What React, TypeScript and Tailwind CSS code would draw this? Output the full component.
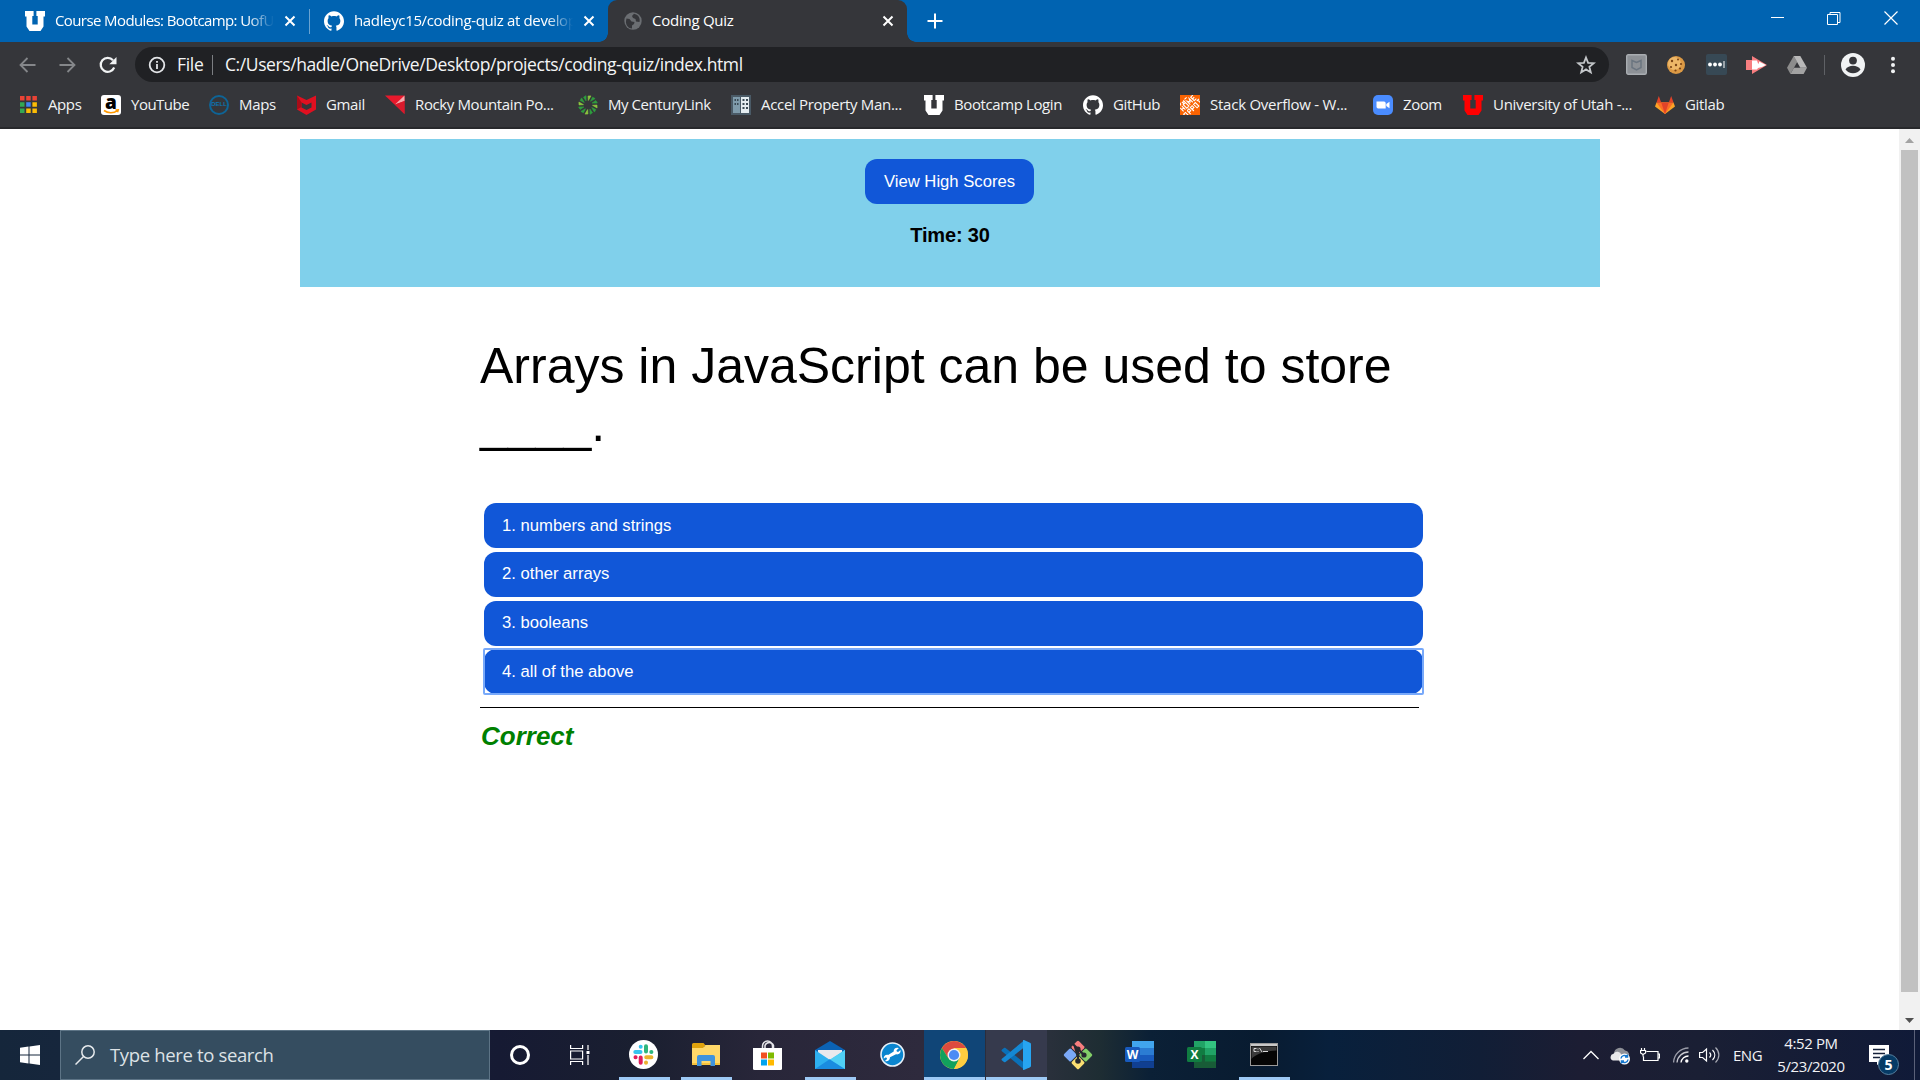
import React from "react";
import { SiGithub } from "react-icons/si";

type P = { children?: React.ReactNode };

const UtahU = ({ className }: { className: string }) => (
  <svg viewBox="0 0 20 20" className={className} fill="currentColor">
    <path d="M0 0h8.600v5H7.300v8.500h5.400V5h-1.300V0H20v5.500h-1.500v10L15.500 20h-11l-3-4.500v-10H0z" />
  </svg>
);

const TabClose = ({ className }: { className: string }) => (
  <svg viewBox="0 0 12 12" className={className} stroke="currentColor" strokeWidth="2" fill="none">
    <path d="M1.500 1.500l9 9M10.500 1.500l-9 9" />
  </svg>
);

const AppsIcon = () => (
  <svg viewBox="0 0 17 17" className="h-[17px] w-[17px]">
    <path fill="#ea4335" d="M0 0h4.500v4.500H0zM6.200 0h4.500v4.500H6.200zM12.400 0h4.500v4.500h-4.500z" />
    <path fill="#34a853" d="M0 6.200h4.500v4.500H0zM0 12.400h4.500v4.500H0z" />
    <path fill="#4285f4" d="M6.200 6.200h4.500v4.500H6.200z" />
    <path fill="#fbbc05" d="M12.400 6.200h4.500v4.500h-4.500zM6.200 12.400h4.500v4.500H6.200zM12.400 12.400h4.500v4.500h-4.500z" />
  </svg>
);

const AmazonIcon = () => (
  <div className="relative h-5 w-5 rounded-[3px] bg-white">
    <span className="absolute -top-[4px] left-[4px] font-['Open_Sans',sans-serif] text-[19px] leading-[22px] font-extrabold text-black">a</span>
    <svg viewBox="0 0 20 20" className="absolute inset-0 h-5 w-5" fill="none" stroke="#f90" strokeWidth="1.600">
      <path d="M3 15.500c4 3 9.500 3 13.500.2M14.500 15l2.700-.2-.7 2.500" />
    </svg>
  </div>
);

const DellIcon = () => (
  <div className="flex h-5 w-5 items-center justify-center rounded-full border-2 border-[#0e6496] font-['Liberation_Sans',sans-serif] text-[6px] font-bold text-[#0f74b0]">
    <span>DELL</span>
  </div>
);

const McAfee = () => (
  <svg viewBox="0 0 19 20" className="h-5 w-[19px]">
    <path fill="#e01020" d="M0 .5L9.500 5 19 .5v14L9.500 20 0 14.500z" />
    <path fill="#35363a" d="M4.500 7.500l5 2.500 5-2.500V12.500l-5 2.500-5-2.500z" />
    <path fill="#a80c18" d="M0 .5L4.500 7.500V12L0 14.500z" />
  </svg>
);

const Rocky = () => (
  <svg viewBox="0 0 20 20" className="h-5 w-5">
    <path fill="#e8192c" d="M0 .5h19.500V19z" />
    <path fill="#f3a9ad" d="M10 9.500L19.500.5V6z" />
    <path fill="#d81a2c" d="M10 9.500L19.500 6v13z" />
  </svg>
);

const Century = () => (
  <svg viewBox="-10 -10 20 20" className="h-5 w-5">
    {Array.from({ length: 12 }, (_, i) => (
      <path
        key={i}
        d="M-.6-4.500L-1.800-8.800 1-9.500z"
        fill={i % 3 === 0 ? "#8cc63f" : "#2e9e3e"}
        stroke={i % 3 === 0 ? "#8cc63f" : "#2e9e3e"}
        strokeWidth=".6"
        transform={`rotate(${i * 30 + 12})`}
      />
    ))}
  </svg>
);

const Accel = () => (
  <svg viewBox="0 0 20 20" className="h-5 w-5">
    <path fill="#4a5a66" d="M0 0h20v20H0z" />
    <path fill="#7f9bab" d="M2 2h7v16H2z" />
    <path fill="#e4ecf0" d="M10 2h8v16h-8z" />
    <path fill="#3b4a55" d="M3.500 4h1.500v2H3.500zM6 4h1.500v2H6zM3.500 8h1.500v2H3.500zM6 8h1.500v2H6zM11.500 4h2v2h-2zM15 4h2v2h-2zM11.500 8h2v2h-2zM15 8h2v2h-2zM11.500 12h2v2h-2zM15 12h2v2h-2z" />
  </svg>
);

const Depot = () => (
  <svg viewBox="0 0 20 20" className="h-5 w-5">
    <path fill="#f96302" d="M0 0h20v20H0z" />
    <g transform="rotate(-45 10 10)" stroke="#fff" fill="none" strokeWidth="1.100">
      <path d="M1 5v5M1 7.500h2.500M3.500 5v5M5.500 5h3v5h-3zM10.500 10V5l1.700 3 1.700-3v5M19 5h-3v5h3M16 7.500h2.500M3.500 2v2M2 2h3M6.500 2v2.500M8.500 2v2.500M6.500 3.200h2M10 2.200h3" />
      <path d="M-1 12v5h2.500v-5zM4 12v5M4 12h2.500v2.500H4M8.500 17v-5h2.500v2.500H8.500M13 12h2.500v5H13zM17.500 12h3M19 12v5" />
    </g>
  </svg>
);

const ZoomIcon = () => (
  <svg viewBox="0 0 20 20" className="h-5 w-5">
    <rect width="20" height="20" rx="5" fill="#4a8cff" />
    <path fill="#fff" d="M3.500 6.500h7.500a1.700 1.700 0 011.700 1.700v5.300H5.200a1.700 1.700 0 01-1.700-1.700zM13.300 9l3.200-2.300v6.600L13.300 11z" />
  </svg>
);

const Gitlab = () => (
  <svg viewBox="0 0 20 20" className="h-5 w-5">
    <path fill="#fca326" d="M10 19L0 11.500 1.500 7.500h17L20 11.500z" />
    <path fill="#fc6d26" d="M10 19L1.500 7.500h17z" />
    <path fill="#e24329" d="M10 19L6.200 7.500h7.600zM1.500 7.500L3.800 1l2.400 6.500zM18.500 7.500L16.200 1l-2.400 6.500z" />
  </svg>
);

const Bookmark = ({ icon, label, cell, text }: { icon: React.ReactNode; label: string; cell: string; text: string }) => (
  <div className={`flex shrink-0 items-center gap-[10px] ${cell}`}>
    <div className="flex w-5 shrink-0 justify-center">{icon}</div>
    <span className={`pb-[2px] text-[15px] leading-5 whitespace-nowrap text-[#f1f3f4] ${text}`}>{label}</span>
  </div>
);

function TabStrip() {
  return (
    <div className="flex h-[42px] bg-[#0063b1] text-[15px] text-white">
      <div className="flex w-[309px] items-center pl-[25px]">
        <UtahU className="h-5 w-5" />
        <div className="ml-[10px] w-[219px] overflow-hidden pb-[2px] tracking-[-0.600px] whitespace-nowrap [mask-image:linear-gradient(to_right,black_88%,transparent)]">Course Modules: Bootcamp: UofU</div>
        <TabClose className="ml-[10px] h-3 w-3" />
      </div>
      <div className="mt-[9px] h-[25px] w-px bg-[#69a3d1]" />
      <div className="flex w-[298px] items-center pl-[14px]">
        <SiGithub className="h-5 w-5" />
        <div className="ml-[10px] w-[219px] overflow-hidden pb-[2px] tracking-[-0.350px] whitespace-nowrap [mask-image:linear-gradient(to_right,black_88%,transparent)]">hadleyc15/coding-quiz at develop</div>
        <TabClose className="ml-[10px] h-3 w-3" />
      </div>
      <div className="relative flex w-[299px] items-center rounded-t-[9px] bg-[#35363a] pl-[16px]">
        <div className="absolute bottom-0 -left-[9px] h-[9px] w-[9px] bg-[radial-gradient(circle_at_0_0,transparent_8.500px,#35363a_9px)]" />
        <div className="absolute -right-[9px] bottom-0 h-[9px] w-[9px] bg-[radial-gradient(circle_at_100%_0,transparent_8.500px,#35363a_9px)]" />
        <svg viewBox="0 0 18 18" className="h-[18px] w-[18px]">
          <circle cx="9" cy="9" r="8.700" fill="#6b6e72" />
          <path fill="#35363a" d="M2.500 6.500l3 .5 2 2.500 3 .5-.5 2-2 1.500v3C4.500 16.500 1.500 13 2 9zM10 1.800L8 4l1 2 2.500 1 .5 2.500 3.500.5C16.500 6 14 2.500 10 1.800z" />
        </svg>
        <span className="ml-[10px] w-[221px] pb-[2px] tracking-[-0.250px]">Coding Quiz</span>
        <TabClose className="ml-[9px] h-3 w-3" />
      </div>
      <svg viewBox="0 0 16 16" className="mt-[13px] ml-[20px] h-4 w-4" stroke="#fff" strokeWidth="2">
        <path d="M8 .5v15M.5 8h15" />
      </svg>
      <div className="flex flex-1 justify-end gap-[43px] pt-[11px] pr-[22px]">
        <svg viewBox="0 0 14 14" className="h-[14px] w-[14px]" stroke="#fff"><path d="M1 6.500h13" /></svg>
        <svg viewBox="0 0 14 14" className="h-[14px] w-[14px]" stroke="#fff" fill="none"><path d="M.5 3.500h10v10H.5zM3 3V1.500h10v10h-2" /></svg>
        <svg viewBox="0 0 14 14" className="h-[14px] w-[14px]" stroke="#fff" strokeWidth="1.200"><path d="M.5.5l13 13M13.500.5l-13 13" /></svg>
      </div>
    </div>
  );
}

function Toolbar() {
  return (
    <div className="flex h-[45px] items-center bg-[#35363a] pl-[19px]">
      <svg viewBox="0 0 17 16" className="h-4 w-[17px]" stroke="#85878a" strokeWidth="1.800" fill="none"><path d="M16.500 8H1.500M8.500 1L1.500 8l7 7" /></svg>
      <svg viewBox="0 0 17 16" className="ml-[23px] h-4 w-[17px]" stroke="#85878a" strokeWidth="1.800" fill="none"><path d="M.5 8h15M8.500 1l7 7-7 7" /></svg>
      <svg viewBox="0 0 18 18" className="ml-[23px] h-[18px] w-[18px]" fill="none" stroke="#f1f3f4" strokeWidth="2.200">
        <path d="M15.200 11.500A7 7 0 1 1 14 4.200" />
        <path d="M17.500 1v7.200h-7.200z" fill="#f1f3f4" stroke="none" />
      </svg>
      <div className="ml-[18px] flex h-[35px] w-[1474px] items-center rounded-full bg-[#202124] pl-[13px] text-[17.500px] text-[#f4f5f6]">
        <svg viewBox="0 0 18 18" className="h-[18px] w-[18px]" fill="none" stroke="#e3e5e8" strokeWidth="1.800">
          <circle cx="9" cy="9" r="7.300" />
          <path d="M9 8v5M9 5v1.800" />
        </svg>
        <span className="ml-[11px] w-[35px] tracking-[-0.300px]">File</span>
        <div className="h-5 w-px bg-[#7c7e82]" />
        <span className="ml-[12px] flex-1 tracking-[-0.410px]">C:/Users/hadle/OneDrive/Desktop/projects/coding-quiz/index.html</span>
        <svg viewBox="0 0 20 20" className="mr-[13px] h-5 w-5" fill="none" stroke="#c4c7ca" strokeWidth="1.800">
          <path d="M10 2.500l2.100 5.300 5.700.4-4.400 3.700 1.400 5.500L10 14.400l-4.800 3 1.400-5.500L2.200 8.200l5.700-.4z" />
        </svg>
      </div>
      <svg viewBox="0 0 21 21" className="ml-[17px] h-[21px] w-[21px]">
        <rect x=".7" y=".7" width="19.600" height="19.600" rx="1.500" fill="#8d9196" stroke="#a9adb1" strokeWidth="1.400" />
        <path d="M6 6.500l4.500 2 4.500-2v7L10.500 16 6 13.500z" fill="none" stroke="#6b7580" strokeWidth="1.500" />
      </svg>
      <svg viewBox="0 0 20 20" className="ml-[19px] h-5 w-5">
        <circle cx="10" cy="10" r="9" fill="#dc9a45" />
        <circle cx="8.500" cy="8.500" r="6.500" fill="#edb768" />
        <g fill="#7a4416"><circle cx="6" cy="6" r="1.200" /><circle cx="12" cy="4.500" r="1" /><circle cx="10" cy="10" r="1.200" /><circle cx="15" cy="9" r="1.100" /><circle cx="5" cy="12" r="1.100" /><circle cx="9.500" cy="15.500" r="1.100" /><circle cx="14" cy="13.500" r="1.100" /></g>
      </svg>
      <svg viewBox="0 0 21 21" className="ml-[20px] h-[21px] w-[21px]">
        <rect width="21" height="21" rx="2" fill="#374955" />
        <g fill="#fff"><circle cx="4" cy="10.500" r="1.900" /><circle cx="9" cy="10.500" r="1.900" /><circle cx="14" cy="10.500" r="1.900" /><path d="M17.500 7h1v7h-1z" /></g>
      </svg>
      <svg viewBox="0 0 21 18" className="ml-[19px] h-[18px] w-[21px]">
        <path fill="#f77e80" d="M0 4h6V0l15 9L6 18v-4H0z" />
        <path fill="#fff" d="M6 4.500h5l1 3h1v-2l3 1.500 4 2-4 2-4 1-1 1.500H6z" />
      </svg>
      <svg viewBox="0 0 20 18" className="ml-[20px] h-[18px] w-5">
        <path fill="#8c8c8c" d="M6.700 0L0 11.700 3.400 18 10.200 6z" />
        <path fill="#b9b9b9" d="M6.700 0h6.600l6.700 11.700h-6.700z" />
        <path fill="#a2a2a2" d="M7 11.700h13L16.600 18H3.400z" />
      </svg>
      <div className="ml-[17px] h-5 w-px bg-[#5f6165]" />
      <svg viewBox="0 0 24 24" className="ml-[16px] h-6 w-6">
        <circle cx="12" cy="12" r="12" fill="#f1f3f4" />
        <circle cx="12" cy="7.600" r="3.900" fill="#35363a" />
        <path fill="#35363a" d="M4.500 16.500c1.500-2.600 4.500-3.700 7.500-3.700s6 1.100 7.500 3.700c-1.600 2.300-4.400 3.700-7.500 3.700s-5.900-1.400-7.500-3.700z" />
      </svg>
      <svg viewBox="0 0 4 18" className="ml-[26px] h-[18px] w-1" fill="#f1f3f4"><circle cx="2" cy="2.700" r="2" /><circle cx="2" cy="9" r="2" /><circle cx="2" cy="15.300" r="2" /></svg>
    </div>
  );
}

function Bookmarks() {
  return (
    <div className="flex h-[42px] items-center border-b-2 border-[#28292c] bg-[#35363a] pb-[5px] pl-[18px]">
      <Bookmark icon={<AppsIcon />} label="Apps" cell="w-[83px]" text="tracking-[-0.400px]" />
      <Bookmark icon={<AmazonIcon />} label="YouTube" cell="w-[108px]" text="tracking-[-0.500px]" />
      <Bookmark icon={<DellIcon />} label="Maps" cell="w-[87px]" text="tracking-[-0.350px]" />
      <Bookmark icon={<McAfee />} label="Gmail" cell="w-[89px]" text="tracking-[-0.350px]" />
      <Bookmark icon={<Rocky />} label="Rocky Mountain Po..." cell="w-[193px]" text="tracking-[-0.380px]" />
      <Bookmark icon={<Century />} label="My CenturyLink" cell="w-[153px]" text="tracking-[-0.450px]" />
      <Bookmark icon={<Accel />} label="Accel Property Man..." cell="w-[193px]" text="tracking-[-0.320px]" />
      <Bookmark icon={<UtahU className="h-5 w-5 text-white" />} label="Bootcamp Login" cell="w-[159px]" text="tracking-[-0.400px]" />
      <Bookmark icon={<SiGithub className="h-5 w-5 text-white" />} label="GitHub" cell="w-[97px]" text="tracking-[-0.400px]" />
      <Bookmark icon={<Depot />} label="Stack Overflow - W..." cell="w-[193px]" text="tracking-[-0.240px]" />
      <Bookmark icon={<ZoomIcon />} label="Zoom" cell="w-[90px]" text="tracking-[-0.450px]" />
      <Bookmark icon={<UtahU className="h-5 w-5 text-[#ff0000]" />} label="University of Utah -..." cell="w-[192px]" text="tracking-[-0.300px]" />
      <Bookmark icon={<Gitlab />} label="Gitlab" cell="w-[90px]" text="tracking-[-0.350px]" />
    </div>
  );
}

const Answer = ({ children, focused = false }: P & { focused?: boolean }) => (
  <div className={focused ? "rounded-[1px] outline-2 -outline-offset-1 outline-[#78a9fa]" : ""}>
    <button className="block h-[45px] w-full rounded-[12px] bg-[#1157d8] px-[18px] text-left text-[16.670px] leading-[44px] text-white">{children}</button>
  </div>
);

function Page() {
  return (
    <div className="flex h-[901px] bg-white font-['Liberation_Sans',Arial,sans-serif] text-black">
      <main className="flex-1">
        <header className="mt-[10px] ml-[300px] flex h-[148px] w-[1300px] flex-col items-center bg-[#80d0eb] pt-5">
          <button className="mr-px h-[45px] w-[169px] rounded-[12px] bg-[#1157d8] text-[16.670px] text-white">View High Scores</button>
          <h3 className="mt-5 text-[20px] leading-[23px] font-bold tracking-[-0.150px]">Time: 30</h3>
        </header>
        <section className="mt-[50px] ml-[480px] w-[943px]">
          <h1 className="text-[50px] leading-[58px] font-normal">
            Arrays in JavaScript can be used to store
            <br />
            ____.
          </h1>
          <div className="mt-[50px] ml-1 flex flex-col gap-[3.750px]">
            <Answer>1. numbers and strings</Answer>
            <Answer>2. other arrays</Answer>
            <Answer>3. booleans</Answer>
            <Answer focused>4. all of the above</Answer>
          </div>
          <div className="mt-[12.750px] h-px w-[939px] bg-black" />
          <p className="mt-[13px] ml-px text-[26px] leading-[30px] font-bold text-[#008000] italic">Correct</p>
        </section>
      </main>
      <div className="flex w-[21px] flex-col items-center bg-[#f1f1f1]">
        <svg viewBox="0 0 21 21" className="h-[21px] w-[21px]" fill="#a3a3a3"><path d="M6 14l4.500-5 4.500 5z" /></svg>
        <div className="h-[842px] w-[17px] bg-[#c1c1c1]" />
        <svg viewBox="0 0 21 21" className="mt-auto h-[21px] w-[21px]" fill="#505050"><path d="M6 9l4.500 5L15 9z" /></svg>
      </div>
    </div>
  );
}

const TaskItem = ({ children, open = false, cell = "w-[62px]", bar = "w-[51px]" }: P & { open?: boolean; cell?: string; bar?: string }) => (
  <div className={`flex h-[50px] shrink-0 flex-col items-center ${cell}`}>
    <div className="mr-px flex h-[47px] items-center pt-[2px]">{children}</div>
    {open && <div className={`h-[3px] bg-[#9dc9f5] ${bar}`} />}
  </div>
);

const Slack = () => (
  <svg viewBox="0 0 29 29" className="h-[29px] w-[29px]">
    <circle cx="14.500" cy="14.500" r="14.500" fill="#fff" />
    <g strokeWidth="4" strokeLinecap="round" fill="none">
      <path stroke="#36c5f0" d="M6.300 12h5.200M11.700 6.700v.1" />
      <path stroke="#2eb67d" d="M17 6.300v5.200M22.300 12h.1" />
      <path stroke="#ecb22e" d="M17.200 17.300h5.200M17 22.600v.1" />
      <path stroke="#e01e5a" d="M11.700 17.500v5.200M6.500 17.300h.1" />
    </g>
  </svg>
);
const Explorer = () => (
  <svg viewBox="0 0 28 24" className="h-6 w-7">
    <path fill="#e0a20c" d="M0 1.500A1.500 1.500 0 011.500 0h10L14 3h-2v3H0z" />
    <path fill="#ffd869" d="M0 5h11l2.500-3H28v20H0z" />
    <path fill="#f5c23c" d="M0 20h28v2H0z" />
    <path fill="#3f93dd" d="M5 14a2 2 0 012-2h14a2 2 0 012 2v9h-4.500v-5h-9v5H5z" />
  </svg>
);
const Store = () => (
  <svg viewBox="0 0 29 30" className="h-[30px] w-[29px]">
    <path fill="none" stroke="#e6e6ea" strokeWidth="1.500" d="M9.500 8V6a5 5 0 0110 0v2M12 8V5.500a4.500 4.500 0 018.500 0V8" />
    <path fill="#fff" d="M0 8h29v20.500A1.500 1.500 0 0127.500 30h-26A1.500 1.500 0 010 28.500z" />
    <path fill="#f25022" d="M8 12.500h6v6H8z" /><path fill="#7fba00" d="M15 12.500h6v6h-6z" />
    <path fill="#00a4ef" d="M8 19.500h6v6H8z" /><path fill="#ffb900" d="M15 19.500h6v6h-6z" />
  </svg>
);
const Mail = () => (
  <svg viewBox="0 0 30 28" className="h-7 w-[30px]">
    <path fill="#0b62b4" d="M0 9L15 0l15 9v3H0z" />
    <path fill="#e9e9ed" d="M3 9h24v6l-12 8L3 15z" />
    <path fill="#2eb0ef" d="M0 9l15 10L30 9v19H0z" />
    <path fill="#1a8ce0" d="M30 28L15 18 0 28z" />
    <path fill="#50d0f5" d="M30 9v19L15 18.500z" />
  </svg>
);
const Wrench = () => (
  <svg viewBox="0 0 25 25" className="h-[25px] w-[25px]">
    <circle cx="12.500" cy="12.500" r="11.500" fill="#0a85cf" stroke="#e8f1f8" strokeWidth="1.600" />
    <path
      fill="#fff"
      d="M18.800 6.200l-2.300 2.100.3 1.300 1.300.3 2.400-1.900c.6 2.600-1.600 5-4.500 4.300L10 15.200c0 3-2.700 4.600-5 3.700l2-1.900-.3-1.300-1.400-.3-1.500 1.300c-.5-2.400 1.700-4.400 4.300-3.800l5.600-3.500C13.400 6.600 16.300 4.900 18.800 6.200z"
    />
  </svg>
);
const Chrome = () => (
  <svg viewBox="-14 -14 28 28" className="h-7 w-7">
    <circle r="14" fill="#ffcd40" />
    <path fill="#dd4b3e" d="M-12.120-7A14 14 0 0112.120-7H0L-5.630 3.250z" />
    <path fill="#12a15d" d="M-12.120-7A14 14 0 000 14L5.630 3.250-5.630 3.250z" />
    <path fill="#ffcd40" d="M12.120-7A14 14 0 010 14L5.630 3.250 0-7z" />
    <circle r="6.500" fill="#f1f1f1" /><circle r="5.100" fill="#4c8bf5" />
  </svg>
);
const Code = () => (
  <svg viewBox="0 0 30 30" className="h-[30px] w-[30px]">
    <path fill="#0a70b8" d="M1 9.500L3 8c.5-.3 1-.3 1.500.1L23 22.500v7L.9 11.200c-.6-.5-.5-1.200.1-1.700z" />
    <path fill="#1488d4" d="M1 20.500L3 22c.5.3 1 .3 1.500-.1L23 7.500v-7L.9 18.800c-.6.5-.5 1.200.1 1.700z" />
    <path fill="#27a5f1" d="M22 .3c.5-.3 1-.3 1.500-.1L29 2.700c.6.300 1 .8 1 1.500v21.600c0 .7-.4 1.200-1 1.500l-5.500 2.500c-.5.200-1 .2-1.500-.1z" />
  </svg>
);
const GitIcon = () => (
  <svg viewBox="0 0 30 30" className="h-[30px] w-[30px]">
    <g transform="rotate(45 15 15)">
      <rect x="4.500" y="4.500" width="10" height="10" rx="1.500" fill="#f77e7e" />
      <rect x="15.500" y="4.500" width="10" height="10" rx="1.500" fill="#82cf68" />
      <rect x="4.500" y="15.500" width="10" height="10" rx="1.500" fill="#7ba9f7" />
      <rect x="15.500" y="15.500" width="10" height="10" rx="1.500" fill="#fbdf72" />
    </g>
    <g stroke="#26292f" strokeWidth="2" fill="#26292f"><path d="M10 4l5 5v12M15 9l6 6" /><circle cx="15" cy="9" r="1.600" /><circle cx="15" cy="21" r="1.800" /><circle cx="21" cy="15" r="1.600" /></g>
  </svg>
);
const Word = () => (
  <div className="relative h-[27px] w-[29px]">
    <svg viewBox="0 0 29 27" className="h-[27px] w-[29px]">
      <path fill="#41a5ee" d="M7 0h22v7H7z" /><path fill="#2b7cd3" d="M7 7h22v7H7z" /><path fill="#185abd" d="M7 14h22v6.500H7z" /><path fill="#103f91" d="M7 20.500h22V27H7z" />
      <rect y="6" width="15" height="15" rx="1.500" fill="#185abd" />
    </svg>
    <span className="absolute top-[6px] left-0 w-[15px] text-center text-[12px] leading-[15px] font-bold text-white">W</span>
  </div>
);
const Excel = () => (
  <div className="relative h-[27px] w-[29px]">
    <svg viewBox="0 0 29 27" className="h-[27px] w-[29px]">
      <path fill="#21a366" d="M7 0h11v7H7z" /><path fill="#33c481" d="M18 0h11v7H18z" /><path fill="#107c41" d="M7 7h11v7H7z" /><path fill="#21a366" d="M18 7h11v7H18z" /><path fill="#185c37" d="M7 14h22v13H7z" /><path fill="#107c41" d="M18 14h11v6.500H18z" />
      <rect y="6" width="15" height="15" rx="1.500" fill="#107c41" />
    </svg>
    <span className="absolute top-[6px] left-0 w-[15px] text-center text-[12px] leading-[15px] font-bold text-white">X</span>
  </div>
);
const Cmd = () => (
  <svg viewBox="0 0 28 23" className="h-[23px] w-7">
    <rect x=".5" y=".5" width="27" height="22" fill="#050505" stroke="#9a9a9a" />
    <path fill="#c8c8c8" d="M1 1h26v2H1z" /><path fill="#3a3a3a" d="M1.500 3.500h25v4C15 8 6 11 1.500 16z" />
    <path stroke="#d8d8d8" fill="none" d="M6.500 5.500H4v3h2.500M8 5.500v1M8 8v1M9.500 5l2.500 4M13 8.500h5" />
  </svg>
);

function Taskbar() {
  return (
    <div className="flex h-[50px] bg-[linear-gradient(90deg,#15263b_0px,#16263c_60px,#161a33_500px,#1a1f30_640px,#282639_760px,#2e2a3d_920px,#29303b_1050px,#1e2d33_1100px,#0b2036_1150px,#081b30_1260px,#08203c_1330px,#111e36_1480px,#1c1d33_1580px,#1a1f34_1700px,#101a38_1920px)] text-[#f2f3f5]">
      <div className="flex w-[60px] items-center justify-center">
        <svg viewBox="0 0 20 20" className="h-5 w-5" fill="#fff"><path d="M0 2.800L8.500 1.600V9.500H0zM9.500 1.500L20 0v9.500H9.500zM0 10.500h8.500v7.900L0 17.200zM9.500 10.500H20V20L9.500 18.500z" /></svg>
      </div>
      <div className="flex w-[430px] items-center border border-[#5d7486] bg-[#354d60] pl-[14px]">
        <svg viewBox="0 0 20 20" className="h-5 w-5" fill="none" stroke="#e6eaed" strokeWidth="1.500"><circle cx="13" cy="7" r="6.200" /><path d="M8.500 11.500L.5 19.500" /></svg>
        <span className="ml-[15px] text-[18.500px] tracking-[-0.350px] text-[#dde2e6]">Type here to search</span>
      </div>
      <div className="flex w-[60px] items-center justify-center"><div className="h-5 w-5 rounded-full border-[3px] border-white" /></div>
      <div className="flex w-[63px] items-center justify-center pr-[3px]">
        <svg viewBox="0 0 20 20" className="h-5 w-5" fill="none" stroke="#fff" strokeWidth="1.200"><path d="M.6 0v3.500h12V0M.6 6h12v8H.6zM.6 20v-3.500h12V20M18 0v5M18 10v10" /><path fill="#fff" stroke="none" d="M16.500 6h3v3h-3z" /></svg>
      </div>
      <TaskItem open><Slack /></TaskItem>
      <TaskItem open><Explorer /></TaskItem>
      <TaskItem><Store /></TaskItem>
      <TaskItem open><Mail /></TaskItem>
      <TaskItem cell="w-[63px]"><Wrench /></TaskItem>
      <TaskItem open cell="w-[61px] bg-[#104577]" bar="w-full"><Chrome /></TaskItem>
      <TaskItem open cell="ml-px w-[61px] bg-[#363a4d]" bar="w-full"><Code /></TaskItem>
      <TaskItem><GitIcon /></TaskItem>
      <TaskItem><Word /></TaskItem>
      <TaskItem><Excel /></TaskItem>
      <TaskItem open><Cmd /></TaskItem>
      <div className="flex flex-1 items-center justify-end">
        <svg viewBox="0 0 16 10" className="h-[10px] w-4" fill="none" stroke="#fff" strokeWidth="1.300"><path d="M.5 9L8 1.500 15.500 9" /></svg>
        <svg viewBox="0 0 21 18" className="mt-[2px] ml-[11px] h-[18px] w-[21px]">
          <path fill="#8e9097" d="M4 6a6 6 0 0111-2.500A4.500 4.500 0 0118 11H8z" /><path fill="#e8e8ea" d="M3 13.500a3.500 3.500 0 01.5-6.800 4.500 4.500 0 018 1.300l-2 5.500z" />
          <circle cx="14.500" cy="12" r="5.500" fill="#fff" /><path fill="none" stroke="#1678d0" strokeWidth="1.500" d="M11 11.500a3.500 3.500 0 016-2M18 12.500a3.500 3.500 0 01-6 2M17.500 7.500v2.500H15M11.500 16.500V14H14" />
        </svg>
        <svg viewBox="0 0 20 14" className="ml-[9px] h-[14px] w-5" fill="none" stroke="#fff" strokeWidth="1.200"><path d="M6.500 3.500h11.500v9H3.500V8.500M18 6h1.500v4H18M1.500 0v2.500M4.500 0v2.500M.6 2.500h5v2.500L3 6.500.6 5zM3 6v2.500" /></svg>
        <svg viewBox="0 0 16 16" className="ml-[13px] h-4 w-4" fill="none" strokeWidth="1.300"><path stroke="#9a9ca8" d="M.6 15.500A15 15 0 0115.500 1" /><path stroke="#c8c9d0" d="M4 15.500A11.500 11.500 0 0115.500 5" /><path stroke="#fff" d="M8 15.500A7.500 7.500 0 0115.500 9" /><circle cx="13.800" cy="14" r="1.700" fill="#fff" /></svg>
        <svg viewBox="0 0 21 18" className="ml-[10px] h-[18px] w-[21px]" fill="none" stroke="#fff" strokeWidth="1.200"><path d="M.6 6.500h3L7.500 3v12l-3.900-3.500h-3zM10.500 6.500c1.500 1.500 1.500 3.500 0 5M13.500 4c3 3 3 7 0 10" /><path stroke="#a8aab4" d="M16.500 1.500c4.500 4.500 4.500 10.500 0 15" /></svg>
        <span className="ml-[13px] w-[30px] text-[15px] tracking-[-0.500px]">ENG</span>
        <div className="ml-[11px] flex w-[74px] flex-col items-center gap-[3px] pb-[2px] text-[15px] leading-5 tracking-[-0.400px] whitespace-nowrap">
          <span>4:52 PM</span>
          <span>5/23/2020</span>
        </div>
        <div className="relative ml-[21px] h-5 w-5">
          <svg viewBox="0 0 20 20" className="h-5 w-5"><path fill="#fff" d="M0 0h20v17h-7l-5 3v-3H0z" /><path stroke="#15213a" strokeWidth="1.300" d="M4 4.500h12M4 8.500h12M4 12.500h7" /></svg>
          <div className="absolute top-[9px] left-[9px] flex h-[21px] w-[21px] items-center justify-center rounded-full border border-[#56809f] bg-[#063b66] text-[14px] font-bold text-white">5</div>
        </div>
        <div className="ml-[25px] h-[50px] w-px bg-[#5a6078]" />
        <div className="w-[5px]" />
      </div>
    </div>
  );
}

export default function App() {
  return (
    <div className="flex h-[1080px] w-[1920px] flex-col overflow-hidden font-['Open_Sans','Noto_Sans',sans-serif]">
      <TabStrip />
      <Toolbar />
      <Bookmarks />
      <Page />
      <Taskbar />
    </div>
  );
}
